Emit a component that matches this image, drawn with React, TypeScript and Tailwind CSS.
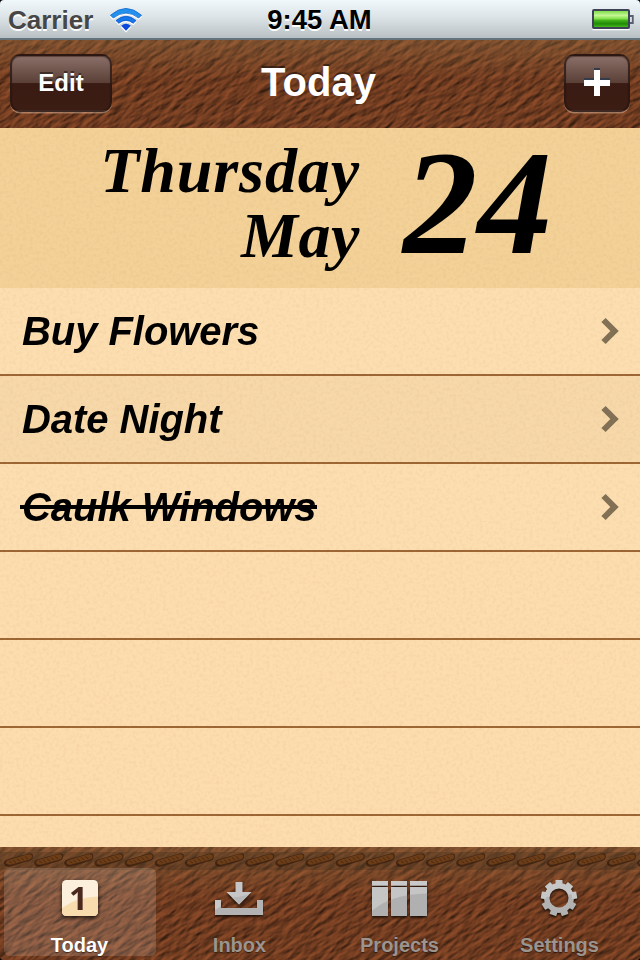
import React from "react";

type LeatherProps = { id: string; height: number; seed: number };

// Grained leather: stretched noise, lit from the side and rotated.
function Leather({ id, height, seed }: LeatherProps) {
  return (
    <svg width={640} height={height} className="block overflow-hidden [grid-area:1/1]" aria-hidden="true">
      <defs>
        <filter id={id} x="0" y="0" width="100%" height="100%" colorInterpolationFilters="sRGB">
          <feTurbulence type="fractalNoise" baseFrequency="0.06 0.19" numOctaves={4} seed={seed} result="n" />
          <feDiffuseLighting in="n" surfaceScale={1.35} diffuseConstant={1.08} lightingColor="#924e2a">
            <feDistantLight azimuth={250} elevation={45} />
          </feDiffuseLighting>
        </filter>
        <linearGradient id={id + "g"} x1="0" y1="0" x2="0" y2="1">
          <stop offset="0" stopColor="#a08050" stopOpacity="0.3" />
          <stop offset="0.45" stopColor="#a08050" stopOpacity="0" />
        </linearGradient>
      </defs>
      <rect width={640} height={height} fill="#6b3820" />
      <g transform="rotate(-33 320 50)">
        <rect x={-60} y={-260} width={760} height={620} filter={`url(#${id})`} />
      </g>
      <rect width={640} height={height} fill={`url(#${id}g)`} />
    </svg>
  );
}

// Fine paper grain, multiplied so that the ink stays black.
function Paper() {
  return (
    <svg width={640} height={719} className="pointer-events-none block mix-blend-multiply [grid-area:1/1]" aria-hidden="true">
      <filter id="paper" x="0" y="0" width="100%" height="100%" colorInterpolationFilters="sRGB">
        <feTurbulence type="fractalNoise" baseFrequency="0.3" numOctaves={3} seed={8} />
        <feColorMatrix values="0.05 0 0 0 0.97  0.08 0 0 0 0.955  0.13 0 0 0 0.93  0 0 0 0 1" />
      </filter>
      <rect width={640} height={719} filter="url(#paper)" />
    </svg>
  );
}

function Wifi() {
  return (
    <svg width={36} height={28} viewBox="0 0 36 28" className="mt-[1px] ml-[15px]">
      <g transform="translate(0 1.5)" fill="#fff">
        <path d="M2 9.2Q18-4.4 34 9.2L30.7 12.6Q18 2.6 5.3 12.6Z" />
        <path d="M7.3 14.3Q18 5.4 28.7 14.3L25.4 17.7Q18 12 10.6 17.7Z" />
        <path d="M12.7 19.5Q18 15 23.3 19.5L18 25Z" />
      </g>
      <path d="M2.500 9.200Q18-4.400 33.500 9.200L30.700 12Q18 2.200 5.300 12Z" fill="#2191ed" stroke="#1167cd" strokeWidth="0.8" />
      <path d="M8 14.600Q18 6 28 14.600L25.200 17.200Q18 11.600 10.800 17.200Z" fill="#1577ea" stroke="#0b55c8" strokeWidth="0.8" />
      <path d="M13.200 19.800Q18 15.500 22.800 19.800L18 24.800Z" fill="#0a49dc" />
    </svg>
  );
}

function Battery() {
  return (
    <svg width={43} height={22} viewBox="0 0 43 22" className="mt-[1px]">
      <defs>
        <linearGradient id="bt" x1="0" y1="0" x2="0" y2="1">
          <stop offset="0" stopColor="#7fdc4c" />
          <stop offset="0.28" stopColor="#c4f792" />
          <stop offset="0.48" stopColor="#83e14a" />
          <stop offset="0.6" stopColor="#3fae17" />
          <stop offset="0.8" stopColor="#1f8a06" />
          <stop offset="1" stopColor="#45b81c" />
        </linearGradient>
      </defs>
      <path d="M0.5 20.6H37.5" stroke="#fff" strokeWidth="1.4" />
      <rect x="1" y="1" width="36" height="18" rx="1" fill="#dfeee0" stroke="#3d4257" strokeWidth="2" />
      <rect x="2" y="2" width="34" height="16" fill="url(#bt)" />
      <path d="M38 7H40.8V14H38" fill="none" stroke="#596070" strokeWidth="1.8" />
    </svg>
  );
}

const BUTTON =
  "flex h-[58px] items-center justify-center rounded-[10px] border-2 border-[#2a1712]/80 bg-[linear-gradient(#8b7069_0%,#5a3f37_50%,#3a1b13_51%,#3b1d14_100%)] shadow-[0_1.5px_0_rgba(255,220,190,0.4),inset_0_1px_1px_rgba(30,10,5,0.45)]";

const TASKS = [
  { name: "Buy Flowers", done: false, tone: "bg-[#fcdeb0]" },
  { name: "Date Night", done: false, tone: "bg-[#f7d8a9]" },
  { name: "Caulk Windows", done: true, tone: "bg-[#fcdeb0]" },
];

function CalendarIcon() {
  return (
    <svg width={60} height={46} viewBox="0 0 60 46" className="shrink-0 overflow-visible drop-shadow-[0_2px_2px_rgba(0,0,0,0.75)]">
      <rect x="12" y="5" width="36" height="36" rx="4.5" fill="#fcefdc" />
      <path d="M12 33Q27 22 48 21.5V36.5Q48 41 43.5 41H16.5Q12 41 12 36.5Z" fill="#f8dcae" />
      <text x="28.500" y="35" textAnchor="middle" fontSize="33" fontWeight="700" fontFamily="Open Sans, Liberation Sans, sans-serif" fill="#4a281d">1</text>
    </svg>
  );
}

function InboxIcon() {
  return (
    <svg width={60} height={46} viewBox="0 0 60 46" className="shrink-0 drop-shadow-[0_2px_1px_rgba(0,0,0,0.65)]">
      <path d="M5 25H11V33H47V25H53V40H5Z" fill="#b3b3b3" />
      <path d="M5 25H11V31L5 35Z" fill="#c8c8c8" />
      <path d="M25.500 7H32.500V17H41.500L29 29.500L16.500 17H25.500Z" fill="#c6c6c6" />
      <path d="M39 19.500L29 29.500L22 22.500Q30 22 39 19.500Z" fill="#b6b6b6" />
    </svg>
  );
}

function ProjectsIcon() {
  return (
    <svg width={60} height={46} viewBox="0 0 60 46" className="shrink-0 drop-shadow-[0_2px_1px_rgba(0,0,0,0.65)]">
      <defs>
        <clipPath id="cols">
          <path d="M2 12H18V41H2ZM21 12H37V41H21ZM40 12H57V41H40Z" />
        </clipPath>
      </defs>
      <path d="M2 6H18V10.800H2ZM21 6H37V10.800H21ZM40 6H57V10.800H40Z" fill="#c9c9c9" />
      <g clipPath="url(#cols)">
        <rect width="60" height="46" fill="#c5c5c5" />
        <path d="M2 36Q21 19 57 18.500V42H2Z" fill="#b0b0b0" />
      </g>
    </svg>
  );
}

function GearIcon() {
  return (
    <svg width={60} height={46} viewBox="0 0 60 46" className="shrink-0 drop-shadow-[0_2px_1px_rgba(0,0,0,0.7)]">
      <defs>
        <linearGradient id="gr" gradientUnits="userSpaceOnUse" x1="0" y1="5" x2="4" y2="41">
          <stop offset="0.5" stopColor="#c6c6c6" />
          <stop offset="0.54" stopColor="#b2b2b2" />
        </linearGradient>
      </defs>
      <circle cx="29" cy="23" r="12.200" fill="none" stroke="url(#gr)" strokeWidth="5.400" />
      {[0, 40, 80, 120, 160, 200, 240, 280, 320].map((a) => (
        <path key={a} d="M25.500 10V5.500Q25.500 5 26 5H32Q32.500 5 32.500 5.500V10Z" fill={a > 90 && a < 270 ? "#b2b2b2" : "#c6c6c6"} transform={`rotate(${a} 29 23)`} />
      ))}
    </svg>
  );
}

const TABS = [
  { label: "Today", icon: <CalendarIcon />, active: true },
  { label: "Inbox", icon: <InboxIcon />, active: false },
  { label: "Projects", icon: <ProjectsIcon />, active: false },
  { label: "Settings", icon: <GearIcon />, active: false },
];

function Stitches() {
  return (
    <svg width={640} height={30} className="block [grid-area:1/1]" aria-hidden="true">
      <rect width={640} height={18} y={5} fill="#3a2a18" opacity="0.28" />
      {Array.from({ length: 22 }, (_, i) => (
        <g key={i} transform={`translate(${4 + i * 30.15} 5)`}>
          <path d="M0 12Q-1 8 5 7L23 2Q29 0 29 4Q29 8 25 9L7 14.500Q2 16 0 12Z" fill="#301709" opacity="0.65" />
          <path d="M2 11Q2 8 6 7.500L23 2.500Q28 1.500 28 4.500Q28 7 24 8L7 12.500Q3 13.500 2 11Z" fill="#6b3d18" />
          <path d="M5 9l3 2M9 8l3 2.500M13 6.700l3 2.500M17 5.600l3 2.500M21 4.500l3 2.500" stroke="#46240b" strokeWidth="0.8" />
        </g>
      ))}
    </svg>
  );
}

export default function App() {
  return (
    <div className="flex h-[960px] w-[640px] flex-col overflow-hidden bg-black font-['Liberation_Sans',Arial,sans-serif] font-bold text-black">
      <header className="grid h-10 shrink-0 grid-cols-3 items-center rounded-t-[4px] border-b-2 border-[#64727b] bg-[linear-gradient(#f0f8fb_0%,#dce4e8_45%,#b9c0c4_100%)]">
        <div className="flex items-center pl-2">
          <span className="pt-[1px] text-[26px] leading-[37px] text-[#464646] [text-shadow:0_2px_0_#fff]">Carrier</span>
          <Wifi />
        </div>
        <span className="pr-[1px] pt-[1px] text-center text-[27.500px] leading-[38px] whitespace-nowrap [text-shadow:0_2px_0_#fff]">9:45 AM</span>
        <div className="flex justify-end pr-[5px]">
          <Battery />
        </div>
      </header>

      <nav className="grid h-[88px] shrink-0 overflow-hidden">
        <Leather id="lt" height={88} seed={3} />
        <div className="z-10 flex items-center justify-between px-[10px] pb-[2px] text-white [grid-area:1/1]">
          <button className={BUTTON + " w-[102px] text-[24px] [text-shadow:0_-2px_0_rgba(0,0,0,0.45)]"}>Edit</button>
          <h1 className="mt-[-2px] ml-[-39px] text-[40px] leading-none [text-shadow:0_-2px_0_rgba(0,0,0,0.45)]">Today</h1>
          <button className={BUTTON + " w-[66px]"} aria-label="Add">
            <svg width={26} height={28} viewBox="0 0 26 28" className="mb-[2px]">
              <path d="M10 0H16V10H26V16H16V26H10V16H0V10H10Z" fill="#343c4c" />
              <path d="M10 2H16V12H26V18H16V28H10V18H0V12H10Z" fill="#fff" />
            </svg>
          </button>
        </div>
      </nav>

      <main className="isolate grid h-[719px] shrink-0">
        <div className="[grid-area:1/1]">
          <section className="flex h-40 bg-[#f3d197] font-['Liberation_Serif',serif] italic">
            <div className="flex w-[360px] flex-col items-end pt-[10px] text-[64px] leading-[65px]">
              <span className="tracking-[0.9px]">Thursday</span>
              <span className="tracking-[0.6px]">May</span>
            </div>
            <span className="ml-[43px] pt-[1px] text-[149px] leading-[148px]">24</span>
          </section>
          {TASKS.map((t) => (
            <div key={t.name} className={"flex h-[88px] items-center justify-between border-b-2 border-[#9e6734] pr-5 pl-5 " + t.tone}>
              <div className="grid items-center">
                <span className="pl-[2px] text-[40px] leading-[46px] tracking-[-0.05px] whitespace-nowrap italic [grid-area:1/1]">{t.name}</span>
                {t.done && <span className="h-1 bg-black [grid-area:1/1]" />}
              </div>
              <svg width={20} height={28} viewBox="0 0 20 28">
                <path d="M3.500 3L14.500 14L3.500 25" fill="none" stroke="#837156" strokeWidth="6" />
              </svg>
            </div>
          ))}
          {[0, 1, 2].map((i) => (
            <div key={i} className="h-[88px] border-b-2 border-[#9e6734] bg-[#fddcad]" />
          ))}
          <div className="h-[31px] bg-[#fddcad]" />
        </div>
        <Paper />
      </main>

      <footer className="grid h-[113px] shrink-0 overflow-hidden rounded-b-[4px]">
        <Leather id="lb" height={113} seed={11} />
        <Stitches />
        <div className="z-10 grid grid-cols-4 pt-[21px] [grid-area:1/1]">
          {TABS.map((t) => (
            <div
              key={t.label}
              className={
                "mx-1 flex h-[88px] flex-col items-center rounded-[6px] pt-[7px] text-[20px] leading-[24px] " +
                (t.active ? "bg-white/15 text-white" : "text-[#9b948f]")
              }
            >
              {t.icon}
              <span className="mt-[12px] pr-[1px] [text-shadow:0_1px_1px_rgba(0,0,0,0.5)]">{t.label}</span>
            </div>
          ))}
        </div>
      </footer>
    </div>
  );
}
